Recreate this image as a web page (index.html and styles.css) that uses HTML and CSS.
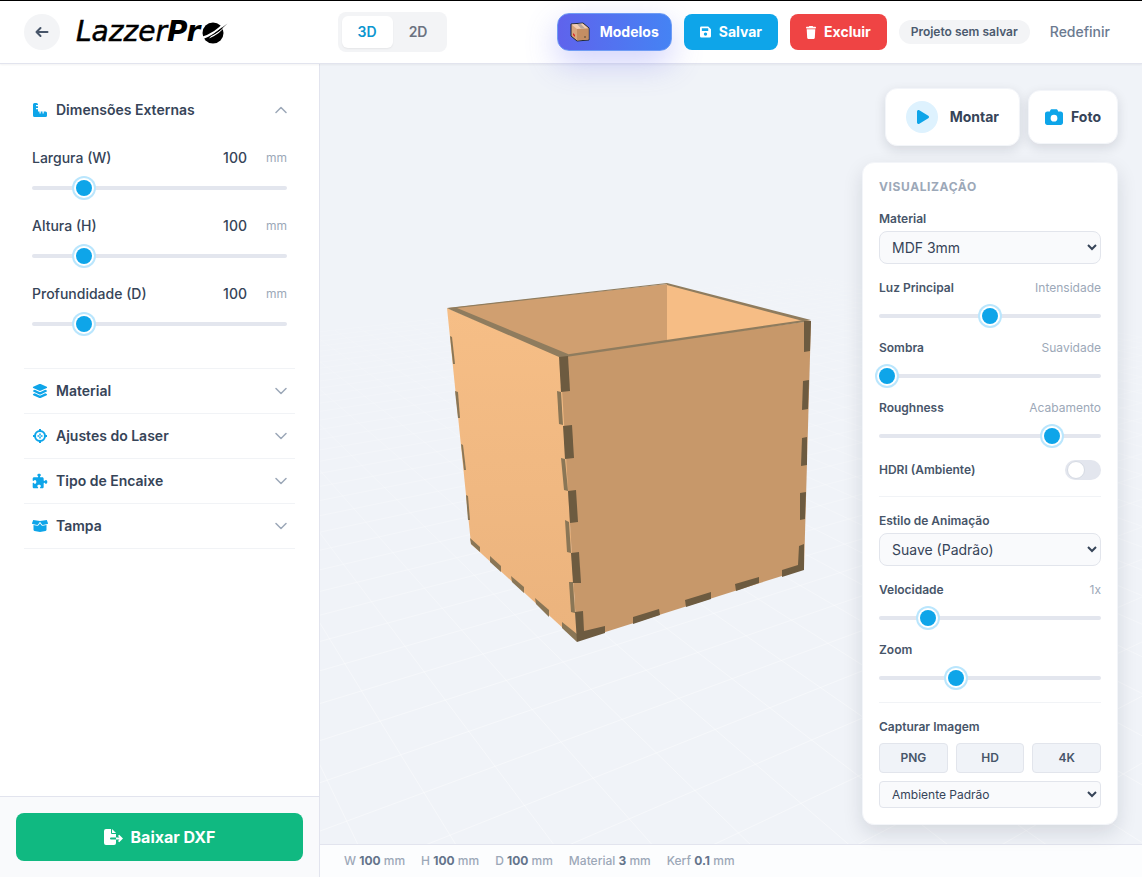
FILE: index.html
```
<!DOCTYPE html>
<html lang="pt-BR">
<head>
  <meta charset="UTF-8">
  <meta name="viewport" content="width=device-width, initial-scale=1.0">
  <title>LazzerPro</title>
  <link rel="stylesheet" href="styles.css">
</head>
<body>
  <header class="topbar">
    <div class="brand">
      <button class="back-btn" type="button" aria-label="Voltar">
        <svg width="14" height="12" viewBox="0 0 14 12" fill="none" stroke="currentColor" stroke-width="2" stroke-linecap="round" stroke-linejoin="round"><path d="M12.5 6H1.5M5.5 2l-4 4 4 4"/></svg>
      </button>
      <a class="logo" href="#" aria-label="LazzerPro">
        <span class="logo-light">Lazzer</span><span class="logo-bold">Pr</span>
        <svg class="logo-disc" width="28" height="24" viewBox="0 0 28 24">
          <circle cx="13" cy="13" r="10.500"/>
          <path d="M1 20Q13 16 27 3L24 2Q15 13 1 17Z" fill="#fff"/>
          <path d="M11 16Q20 12 28 3.500Q20 14 9 18.500Z" fill="#fff"/>
          <path d="M4 19.500Q16 15 27.500 3.500Q20 9 15 13Q10 17 4 19.500Z"/>
        </svg>
      </a>
    </div>

    <div class="view-toggle">
      <button class="view-btn active" type="button">3D</button>
      <button class="view-btn" type="button">2D</button>
    </div>

    <div class="actions">
      <button class="btn btn-models" type="button">
        <svg width="20" height="20" viewBox="0 0 20 20" stroke-linejoin="round">
          <path d="M1 2L13 1L19 6V18L7 19L1 14Z" fill="#d9a57c" stroke="#1f2937"/>
          <path d="M1.500 2.500L12.500 1.500L18.500 6.500L7 7Z" fill="#f3cfb3"/>
          <path d="M7 7L18.500 6.500V17.500L7 18.500Z" fill="#c48e63"/>
          <path d="M7 2L11 2L15 6.500H11Z" fill="#b9a69b"/>
          <path d="M3 11l2 2v2l-2-2z" fill="#dc2626"/>
          <path d="M14 14h2v2h-2z" fill="#8a6a4c"/>
        </svg>
        Modelos
      </button>
      <button class="btn btn-save" type="button">
        <svg width="11" height="12" viewBox="0 0 12 12" fill="currentColor" fill-rule="evenodd"><path d="M2 0H9L12 3V10.500Q12 12 10.500 12H1.500Q0 12 0 10.500V1.500Q0 0 1.500 0ZM2 2V5H9V2ZM6 6.500a1.800 1.800 0 1 0 .01 0Z"/></svg>
        Salvar
      </button>
      <button class="btn btn-delete" type="button">
        <svg width="10" height="13" viewBox="0 0 448 512" preserveAspectRatio="none" fill="currentColor"><path d="M135.200 17.700L128 32H32C14.300 32 0 46.300 0 64S14.300 96 32 96H416c17.700 0 32-14.300 32-32s-14.300-32-32-32H320l-7.200-14.300C307.400 6.800 296.300 0 284.200 0H163.800c-12.100 0-23.200 6.800-28.600 17.700zM416 128H32L53.200 467c1.600 25.300 22.600 45 47.900 45H346.900c25.300 0 46.300-19.700 47.900-45L416 128z"/></svg>
        Excluir
      </button>
      <span class="status-pill">Projeto sem salvar</span>
      <button class="reset-btn" type="button">Redefinir</button>
    </div>
  </header>

  <div class="layout">
    <aside class="sidebar">
      <div class="sections">
        <section class="section open">
          <button class="section-head" type="button">
            <svg class="section-icon" viewBox="0 0 16 16" fill="currentColor"><path d="M2.500 1H4.500Q6 1 6 2.500V3H4V4.200H6V6H4V7.200H6V9.500H7.500V11.500H8.700V9.500H10.500V11.500H11.700V9.500H13.500Q15 9.500 15 11V13.500Q15 15 13.500 15H2.500Q1 15 1 13.500V2.500Q1 1 2.500 1Z"/></svg>
            <span>Dimensões Externas</span>
            <svg class="chevron" viewBox="0 0 12 8"><path d="M1 6.500L6 1.500L11 6.500"/></svg>
          </button>
          <div class="section-body">
            <div class="dim">
              <div class="dim-row">
                <label for="width">Largura (W)</label>
                <input class="dim-value" type="number" value="100" aria-label="Largura">
                <span class="unit">mm</span>
              </div>
              <input id="width" type="range" min="10" max="500" value="100">
            </div>
            <div class="dim">
              <div class="dim-row">
                <label for="height">Altura (H)</label>
                <input class="dim-value" type="number" value="100" aria-label="Altura">
                <span class="unit">mm</span>
              </div>
              <input id="height" type="range" min="10" max="500" value="100">
            </div>
            <div class="dim">
              <div class="dim-row">
                <label for="depth">Profundidade (D)</label>
                <input class="dim-value" type="number" value="100" aria-label="Profundidade">
                <span class="unit">mm</span>
              </div>
              <input id="depth" type="range" min="10" max="500" value="100">
            </div>
          </div>
        </section>

        <section class="section">
          <button class="section-head" type="button">
            <svg class="section-icon" viewBox="0 0 576 512" fill="currentColor"><path d="M264.500 5.200c14.900-6.900 32.100-6.900 47 0l218.600 101c8.500 3.900 13.900 12.400 13.900 21.800s-5.400 17.900-13.900 21.800l-218.600 101c-14.900 6.900-32.100 6.900-47 0L45.900 149.800C37.400 145.800 32 137.300 32 128s5.400-17.900 13.900-21.800L264.500 5.200zM476.900 209.600l53.200 24.600c8.500 3.900 13.900 12.400 13.900 21.800s-5.400 17.900-13.900 21.800l-218.600 101c-14.900 6.900-32.100 6.900-47 0L45.900 277.800C37.400 273.800 32 265.300 32 256s5.400-17.900 13.900-21.800l53.200-24.600 152 70.200c23.400 10.800 50.400 10.800 73.800 0l152-70.200zm-152 198.200l152-70.200 53.200 24.600c8.500 3.900 13.900 12.400 13.900 21.800s-5.400 17.900-13.900 21.800l-218.600 101c-14.900 6.900-32.100 6.900-47 0L45.900 405.800C37.400 401.800 32 393.300 32 384s5.400-17.900 13.900-21.800l53.200-24.600 152 70.200c23.400 10.800 50.400 10.800 73.800 0z"/></svg>
            <span>Material</span>
            <svg class="chevron" viewBox="0 0 12 8"><path d="M1 1.500L6 6.500L11 1.500"/></svg>
          </button>
        </section>
        <section class="section">
          <button class="section-head" type="button">
            <svg class="section-icon" viewBox="0 0 16 16" fill="none" stroke="currentColor" stroke-width="2"><circle cx="8" cy="8" r="5"/><path d="M8 1V4M8 12V15M1 8H4M12 8H15"/><path d="M8 5.500V10.500M5.500 8H10.500" stroke-width="1.500" stroke-dasharray="1.800 1.400"/></svg>
            <span>Ajustes do Laser</span>
            <svg class="chevron" viewBox="0 0 12 8"><path d="M1 1.500L6 6.500L11 1.500"/></svg>
          </button>
        </section>
        <section class="section">
          <button class="section-head" type="button">
            <svg class="section-icon" viewBox="-24 -24 560 560" fill="currentColor"><path d="M192 104.800c0-9.200-5.800-17.300-13.200-22.800C167.200 73.300 160 61.300 160 48c0-26.500 28.700-48 64-48s64 21.500 64 48c0 13.300-7.200 25.300-18.800 34c-7.400 5.500-13.200 13.600-13.200 22.800c0 12.800 10.400 23.200 23.200 23.200H336c26.500 0 48 21.500 48 48v56.800c0 12.800 10.400 23.200 23.200 23.200c9.200 0 17.300-5.800 22.800-13.200c8.700-11.600 20.700-18.800 34-18.800c26.500 0 48 28.700 48 64s-21.500 64-48 64c-13.300 0-25.300-7.200-34-18.800c-5.500-7.400-13.600-13.200-22.800-13.200c-12.800 0-23.200 10.400-23.200 23.200V464c0 26.500-21.500 48-48 48H279.200c-12.800 0-23.200-10.400-23.200-23.200c0-9.200 5.800-17.300 13.200-22.800c11.600-8.700 18.800-20.700 18.800-34c0-26.500-28.700-48-64-48s-64 21.500-64 48c0 13.300 7.200 25.300 18.800 34c7.400 5.500 13.200 13.600 13.200 22.800c0 12.800-10.400 23.200-23.200 23.200H48c-26.500 0-48-21.500-48-48V343.200C0 330.400 10.400 320 23.200 320c9.200 0 17.300 5.800 22.800 13.200C54.700 344.800 66.700 352 80 352c26.500 0 48-28.700 48-64s-21.500-64-48-64c-13.300 0-25.300 7.200-34 18.800C40.500 250.200 32.400 256 23.200 256C10.400 256 0 245.600 0 232.800V176c0-26.500 21.500-48 48-48H168.800c12.800 0 23.200-10.400 23.200-23.200z"/></svg>
            <span>Tipo de Encaixe</span>
            <svg class="chevron" viewBox="0 0 12 8"><path d="M1 1.500L6 6.500L11 1.500"/></svg>
          </button>
        </section>
        <section class="section">
          <button class="section-head" type="button">
            <svg class="section-icon" viewBox="0 0 16 16" fill="currentColor"><path d="M1.200 2L8 3L14.800 2L16 5.200Q16 5.800 15.400 6L10.800 7Q10.200 7 9.900 6.600L8 3.800L6.100 6.600Q5.800 7 5.200 7L.6 6Q0 5.800 0 5.200Z"/><path d="M1.500 7L5.200 7.800Q6.200 8 6.800 7.100L8 5.200L9.200 7.100Q9.800 8 10.800 7.800L14.500 7V11.700Q14.500 12.600 13.500 12.900L8 14L2.500 12.900Q1.500 12.600 1.500 11.700Z"/></svg>
            <span>Tampa</span>
            <svg class="chevron" viewBox="0 0 12 8"><path d="M1 1.500L6 6.500L11 1.500"/></svg>
          </button>
        </section>
      </div>

      <div class="sidebar-footer">
        <button class="download-btn" type="button">
          <svg width="19" height="16" viewBox="0 0 19 16" fill="currentColor"><path d="M2 0H7V4Q7 5 8 5H12V8.500H7Q6 8.500 6 9.500Q6 10.500 7 10.500H12V14Q12 16 10 16H2Q0 16 0 14V2Q0 0 2 0Z"/><path d="M8 0L12 4H8Z"/><path d="M12 8.500H15.500L14 7L15.200 5.800L19 9.500L15.200 13.200L14 12L15.500 10.500H12Z"/></svg>
          Baixar DXF
        </button>
      </div>
    </aside>

    <main class="workspace">
      <div class="viewport">
        <svg class="scene" viewBox="320 64 822 780" preserveAspectRatio="xMidYMid slice" role="img" aria-label="Caixa 3D">
          <defs>
            <linearGradient id="fog" x1="0" y1="270" x2="0" y2="700" gradientUnits="userSpaceOnUse">
              <stop offset="0" stop-color="#fff" stop-opacity="0.05"/>
              <stop offset="1" stop-color="#fff" stop-opacity="0.4"/>
            </linearGradient>
            <linearGradient id="sideFace" x1="0" y1="310" x2="0" y2="640" gradientUnits="userSpaceOnUse">
              <stop offset="0" stop-color="#f6be86"/>
              <stop offset="1" stop-color="#ebb37d"/>
            </linearGradient>
          </defs>
          <path id="floor" fill="none" stroke="url(#fog)"/>

          <!-- inside walls -->
          <path d="M448 308L667 284V341L563 356Z" fill="#d09f70"/>
          <path d="M667 284L811 321L667 342Z" fill="#f6bd85"/>
          <!-- outer faces -->
          <path d="M447 308L560 356L563 392L577 641L471 544Z" fill="url(#sideFace)"/>
          <path d="M560 356L811 321L804 569L577 641Z" fill="#c7986a"/>
          <!-- rim -->
          <g fill="#8f7c5e">
            <path d="M447 308L667 283V284L457 308L568 354V357H559L451 310Z"/>
            <path d="M563 355L804 320L811 321L566 357Z"/>
            <path d="M667 283L811 320L803 321L667 285Z"/>
          </g>
          <!-- finger joints, lit side -->
          <g fill="#8a7656">
            <path d="M557 391L561 392L563 425L559 424Z"/>
            <path d="M561 458L565 459L568 491L564 490Z"/>
            <path d="M565 520L569 522L571 553L567 552Z"/>
            <path d="M569 582L573 582L575 613L571 612Z"/>
            <path d="M450 336L452 337L455 364L453 364Z"/>
            <path d="M455 391L458 392L460 418L458 418Z"/>
            <path d="M461 444L463 445L466 470L464 470Z"/>
            <path d="M466 495L468 496L470 520L468 520Z"/>
            <path d="M470 538L480 547V552L471 544Z"/>
            <path d="M490 556L501 566V572L490 562Z"/>
            <path d="M511 576L524 587V593L512 582Z"/>
            <path d="M535 598L549 610V617L536 604Z"/>
            <path d="M562 622L577 634V642L562 628Z"/>
          </g>
          <!-- finger joints, shaded side -->
          <g fill="#6d5b40">
            <path d="M559 357L568 356L570 391L561 392Z"/>
            <path d="M563 426L572 425L574 458L565 459Z"/>
            <path d="M568 491L576 490L578 522L570 523Z"/>
            <path d="M571 553L579 552L581 583L573 583Z"/>
            <path d="M575 612L583 611L584 631L605 626V633L577 642Z"/>
            <path d="M804 321L811 321L810 351L804 352Z"/>
            <path d="M803 381L809 380L808 409L802 410Z"/>
            <path d="M802 438L807 437L807 465L801 466Z"/>
            <path d="M800 493L806 492L805 519L800 520Z"/>
            <path d="M799 546L804 544L804 570L782 577V570L798 565Z"/>
            <path d="M735 584L759 577V583L736 591Z"/>
            <path d="M685 600L711 592V599L686 607Z"/>
            <path d="M633 617L659 609L660 615L633 624Z"/>
          </g>
        </svg>

        <div class="overlay">
          <div class="tools">
            <button class="tool-btn tool-play" type="button">
              <span class="play-badge">
                <svg width="12" height="16" viewBox="0 0 384 512" fill="currentColor"><path d="M73 39c-14.800-9.100-33.400-9.400-48.500-.9S0 62.600 0 80V432c0 17.400 9.400 33.400 24.500 41.900s33.700 8.100 48.500-.9L361 297c14.300-8.700 23-24.200 23-41s-8.700-32.200-23-41L73 39z"/></svg>
              </span>
              Montar
            </button>
            <button class="tool-btn tool-photo" type="button">
              <svg width="18" height="18" viewBox="0 0 512 512" fill="currentColor"><path d="M149.100 64.800L138.700 96H64C28.700 96 0 124.700 0 160V416c0 35.300 28.700 64 64 64H448c35.300 0 64-28.700 64-64V160c0-35.300-28.700-64-64-64H373.300L362.900 64.800C356.400 45.200 338.100 32 317.400 32H194.600c-20.700 0-39 13.200-45.500 32.800zM256 192a96 96 0 1 1 0 192 96 96 0 1 1 0-192z"/></svg>
              Foto
            </button>
          </div>

          <div class="panel">
            <h2 class="panel-title">Visualização</h2>
            <div class="select-field">
              <label for="material">Material</label>
              <select id="material"><option>MDF 3mm</option></select>
            </div>
            <div class="slider-field">
              <div class="field-row"><label for="light">Luz Principal</label><span class="hint">Intensidade</span></div>
              <input id="light" type="range" min="0" max="100" value="50">
            </div>
            <div class="slider-field">
              <div class="field-row"><label for="shadow">Sombra</label><span class="hint">Suavidade</span></div>
              <input id="shadow" type="range" min="0" max="100" value="0">
            </div>
            <div class="slider-field">
              <div class="field-row"><label for="roughness">Roughness</label><span class="hint">Acabamento</span></div>
              <input id="roughness" type="range" min="0" max="100" value="80">
            </div>
            <div class="field-row switch-row">
              <label for="hdri">HDRI (Ambiente)</label>
              <input id="hdri" class="switch" type="checkbox">
            </div>
            <hr class="divider">
            <div class="select-field">
              <label for="anim">Estilo de Animação</label>
              <select id="anim"><option>Suave (Padrão)</option></select>
            </div>
            <div class="slider-field">
              <div class="field-row"><label for="speed">Velocidade</label><span class="hint">1x</span></div>
              <input id="speed" type="range" min="0" max="100" value="20">
            </div>
            <div class="slider-field">
              <div class="field-row"><label for="zoom">Zoom</label></div>
              <input id="zoom" type="range" min="0" max="300" value="100">
            </div>
            <hr class="divider">
            <label class="capture-label" for="environment">Capturar Imagem</label>
            <div class="capture-row">
              <button class="capture-btn" type="button">PNG</button>
              <button class="capture-btn" type="button">HD</button>
              <button class="capture-btn" type="button">4K</button>
            </div>
            <select id="environment" class="select-small"><option>Ambiente Padrão</option></select>
          </div>
        </div>
      </div>

      <footer class="statusbar">
        <span>W <b>100</b> mm</span>
        <span>H <b>100</b> mm</span>
        <span>D <b>100</b> mm</span>
        <span>Material <b>3</b> mm</span>
        <span>Kerf <b>0.1</b> mm</span>
      </footer>
    </main>
  </div>

  <script src="script.js"></script>
</body>
</html>
```
FILE: styles.css
```
* {
  box-sizing: border-box;
}
body {
  margin: 0;
  height: 100vh;
  display: flex;
  flex-direction: column;
  overflow: hidden;
  font-family: Inter, "Liberation Sans", sans-serif;
  font-size: 14px;
  line-height: 20px;
  color: #364458;
  background: #fff;
}
button, input, select {
  font: inherit;
  color: inherit;
}
button {
  padding: 0;
  border: 0;
  background: none;
  cursor: pointer;
}

/* top bar */
.topbar {
  position: relative;
  z-index: 2;
  display: flex;
  align-items: center;
  justify-content: space-between;
  flex: none;
  height: 64px;
  padding: 0 24px;
  background: #fff;
  border-top: 1px solid #000;
  border-bottom: 1px solid #e2e4ee;
  box-shadow: 0 1px 2px rgba(0, 0, 0, 0.05);
}
.brand {
  display: flex;
  align-items: center;
  gap: 16px;
}
.back-btn {
  display: flex;
  align-items: center;
  justify-content: center;
  width: 36px;
  height: 36px;
  border-radius: 50%;
  background: #f3f4f6;
  color: #475569;
}
.logo {
  display: flex;
  align-items: center;
  color: #000;
  text-decoration: none;
  font-family: "DejaVu Sans", sans-serif;
  font-size: 28px;
  font-style: italic;
  line-height: 24px;
}
.logo-light {
  -webkit-text-stroke: 0.5px #000;
}
.logo-bold {
  font-weight: bold;
}
.view-toggle {
  display: flex;
  padding: 4px;
  border-radius: 8px;
  background: #f3f4f6;
}
.view-btn {
  padding: 6px 16px;
  border-radius: 6px;
  font-weight: 600;
  color: #6b7280;
}
.view-btn.active {
  background: #fff;
  color: #0c96cf;
  box-shadow: 0 1px 2px rgba(0, 0, 0, 0.06);
}
.actions {
  display: flex;
  align-items: center;
  gap: 12px;
}
.btn {
  display: flex;
  align-items: center;
  gap: 8px;
  padding: 8px 16px;
  border-radius: 8px;
  color: #fff;
  font-weight: 700;
}
.btn-models {
  gap: 10px;
  padding: 8px 12px;
  border: 1px solid #6f9cf5;
  border-radius: 12px;
  background: linear-gradient(90deg, #5f63ec, #4583f4);
  box-shadow: 0 12px 32px rgba(99, 102, 241, 0.3);
}
.btn-save {
  background: #0ea5e9;
}
.btn-delete {
  background: #ef4444;
}
.status-pill {
  padding: 4px 12px;
  border-radius: 12px;
  background: #f3f4f6;
  font-size: 12px;
  line-height: 16px;
  font-weight: 600;
  color: #4b5a6e;
}
.reset-btn {
  padding: 8px;
  font-weight: 500;
  color: #6b7a90;
}

/* sidebar */
.layout {
  display: flex;
  flex: 1;
  min-height: 0;
}
.sidebar {
  display: flex;
  flex-direction: column;
  flex: none;
  width: 320px;
  border-right: 1px solid #e2e4ee;
}
.sections {
  flex: 1;
  padding: 24px;
}
.section {
  border-bottom: 1px solid #f1f3f6;
}
.section-head {
  display: flex;
  align-items: center;
  gap: 8px;
  width: 100%;
  padding: 12px 8px;
  font-weight: 600;
  text-align: left;
}
.section-head span {
  flex: 1;
}
.section-icon {
  width: 16px;
  height: 16px;
  color: #0ea5e9;
}
.chevron {
  width: 12px;
  height: 8px;
  fill: none;
  stroke: #9ca8b8;
  stroke-width: 1.5;
  stroke-linecap: round;
  stroke-linejoin: round;
}
.section-body {
  padding: 16px 8px;
}
.dim {
  margin-bottom: 16px;
}
.dim-row {
  display: flex;
  align-items: center;
  margin-bottom: 8px;
}
.dim-row label {
  flex: 1;
  font-weight: 500;
}
.dim-value {
  width: 64px;
  height: 20px;
  padding: 0 8px;
  border: 0;
  background: none;
  text-align: right;
  font-weight: 500;
  appearance: textfield;
}
.dim-value::-webkit-inner-spin-button {
  display: none;
}
.unit {
  width: 32px;
  text-align: right;
  font-size: 12px;
  color: #9ca8b8;
}
.sidebar-footer {
  padding: 16px;
  border-top: 1px solid #e2e4ee;
  background: #f9fafc;
}
.download-btn {
  display: flex;
  align-items: center;
  justify-content: center;
  gap: 8px;
  width: 100%;
  height: 48px;
  border-radius: 8px;
  background: #10b981;
  color: #fff;
  font-size: 16px;
  font-weight: 700;
}

/* sliders */
input[type="range"] {
  display: block;
  width: 100%;
  height: 24px;
  margin: 0;
  appearance: none;
  background: none;
}
input[type="range"]::-webkit-slider-runnable-track {
  height: 4px;
  border-radius: 2px;
  background: #e3e6ee;
}
input[type="range"]::-webkit-slider-thumb {
  appearance: none;
  width: 16px;
  height: 16px;
  margin-top: -6px;
  border-radius: 50%;
  background: #0ea5e9;
  box-shadow: 0 0 0 2px #fff, 0 0 0 4px #bae6fd;
}

/* workspace */
.workspace {
  display: flex;
  flex-direction: column;
  flex: 1;
  min-width: 0;
}
.viewport {
  position: relative;
  flex: 1;
  min-height: 0;
  background: #f0f3f8;
}
.scene {
  position: absolute;
  inset: 0;
  width: 100%;
  height: 100%;
}
.overlay {
  position: absolute;
  top: 24px;
  right: 24px;
  display: flex;
  flex-direction: column;
  align-items: flex-end;
  gap: 16px;
}
.tools {
  display: flex;
  align-items: center;
  gap: 8px;
}
.tool-btn {
  display: flex;
  align-items: center;
  border: 1px solid #f3f5f9;
  border-radius: 12px;
  background: #fff;
  font-weight: 700;
  box-shadow: 0 4px 12px rgba(15, 23, 42, 0.12);
}
.tool-play {
  gap: 12px;
  padding: 12px 20px;
}
.tool-photo {
  gap: 8px;
  padding: 16px;
}
.tool-btn svg {
  color: #0ea5e9;
}
.play-badge {
  display: flex;
  align-items: center;
  justify-content: center;
  width: 32px;
  height: 32px;
  padding-left: 2px;
  border-radius: 50%;
  background: #def2fe;
}
.panel {
  width: 256px;
  padding: 16px;
  border: 1px solid #f3f5f9;
  border-radius: 12px;
  background: #fff;
  font-size: 12px;
  line-height: 16px;
  box-shadow: 0 8px 20px rgba(15, 23, 42, 0.12);
}
.panel-title {
  margin: 0 0 16px;
  font-size: 12px;
  font-weight: 700;
  text-transform: uppercase;
  letter-spacing: 0.05em;
  color: #9ca8b8;
}
.panel label {
  display: block;
  font-weight: 600;
  color: #475569;
}
.select-field {
  margin-bottom: 16px;
}
.panel select {
  display: block;
  width: 100%;
  height: 33px;
  margin-top: 4px;
  padding: 0 8px;
  border: 1px solid #e2e5ec;
  border-radius: 8px;
  background: #f9fafc;
  font-size: 14px;
}
.panel .select-small {
  height: 27px;
  margin-top: 8px;
  border-radius: 4px;
  font-size: 12px;
}
.slider-field {
  margin-bottom: 12px;
}
.field-row {
  display: flex;
  align-items: center;
  justify-content: space-between;
}
.slider-field .field-row {
  margin-bottom: 8px;
}
.hint {
  color: #9ca8b8;
}
.switch {
  display: flex;
  align-items: center;
  width: 36px;
  height: 20px;
  margin: 0;
  padding: 2px;
  border-radius: 10px;
  appearance: none;
  background: #e3e6ee;
}
.switch::before {
  content: "";
  width: 16px;
  height: 16px;
  border: 1px solid #d5dae3;
  border-radius: 50%;
  background: #fff;
}
.switch:checked {
  justify-content: flex-end;
  background: #0ea5e9;
}
.switch-row {
  margin-bottom: 16px;
}
.divider {
  margin: 0 0 16px;
  border: 0;
  border-top: 1px solid #f1f3f6;
}
.capture-row {
  display: flex;
  gap: 8px;
  margin-top: 8px;
}
.capture-btn {
  flex: 1;
  height: 30px;
  border: 1px solid #e2e5ec;
  border-radius: 4px;
  background: #f0f3f8;
  font-weight: 600;
  color: #475569;
}

/* status bar */
.statusbar {
  display: flex;
  align-items: center;
  gap: 16px;
  height: 33px;
  padding: 0 24px;
  border-top: 1px solid #e2e4ee;
  background: #fcfdfe;
  font-size: 12px;
  font-weight: 500;
  color: #9ca8b8;
}
.statusbar b {
  font-weight: 700;
  color: #64748b;
}
```
FILE: script.js
```
// floor grid in perspective, one unit = one side of the box
const origin = [577, 641];
const vanishU = [2254, 116];
const vanishV = [16, 128];
const scaleU = 0.1566;
const scaleV = 0.233;
const reach = 6.1;
const step = 0.2;

function depth(u, v) {
  return 1 + u * scaleU + v * scaleV;
}

function project(u, v) {
  const w = depth(u, v);
  const x = (origin[0] + u * scaleU * vanishU[0] + v * scaleV * vanishV[0]) / w;
  const y = (origin[1] + u * scaleU * vanishU[1] + v * scaleV * vanishV[1]) / w;
  return x.toFixed(1) + " " + y.toFixed(1);
}

let d = "";
for (let i = -28; i <= 30; i++) {
  const k = 0.1 + i * step;
  // keep the near end of each line in front of the camera
  const nearV = Math.max(-5.1, (0.4 - 1 - k * scaleU) / scaleV);
  const nearU = Math.max(-5.1, (0.4 - 1 - k * scaleV) / scaleU);
  if (nearV < reach) d += "M" + project(k, nearV) + "L" + project(k, reach);
  if (nearU < reach) d += "M" + project(nearU, k) + "L" + project(reach, k);
}
document.getElementById("floor").setAttribute("d", d);
```
